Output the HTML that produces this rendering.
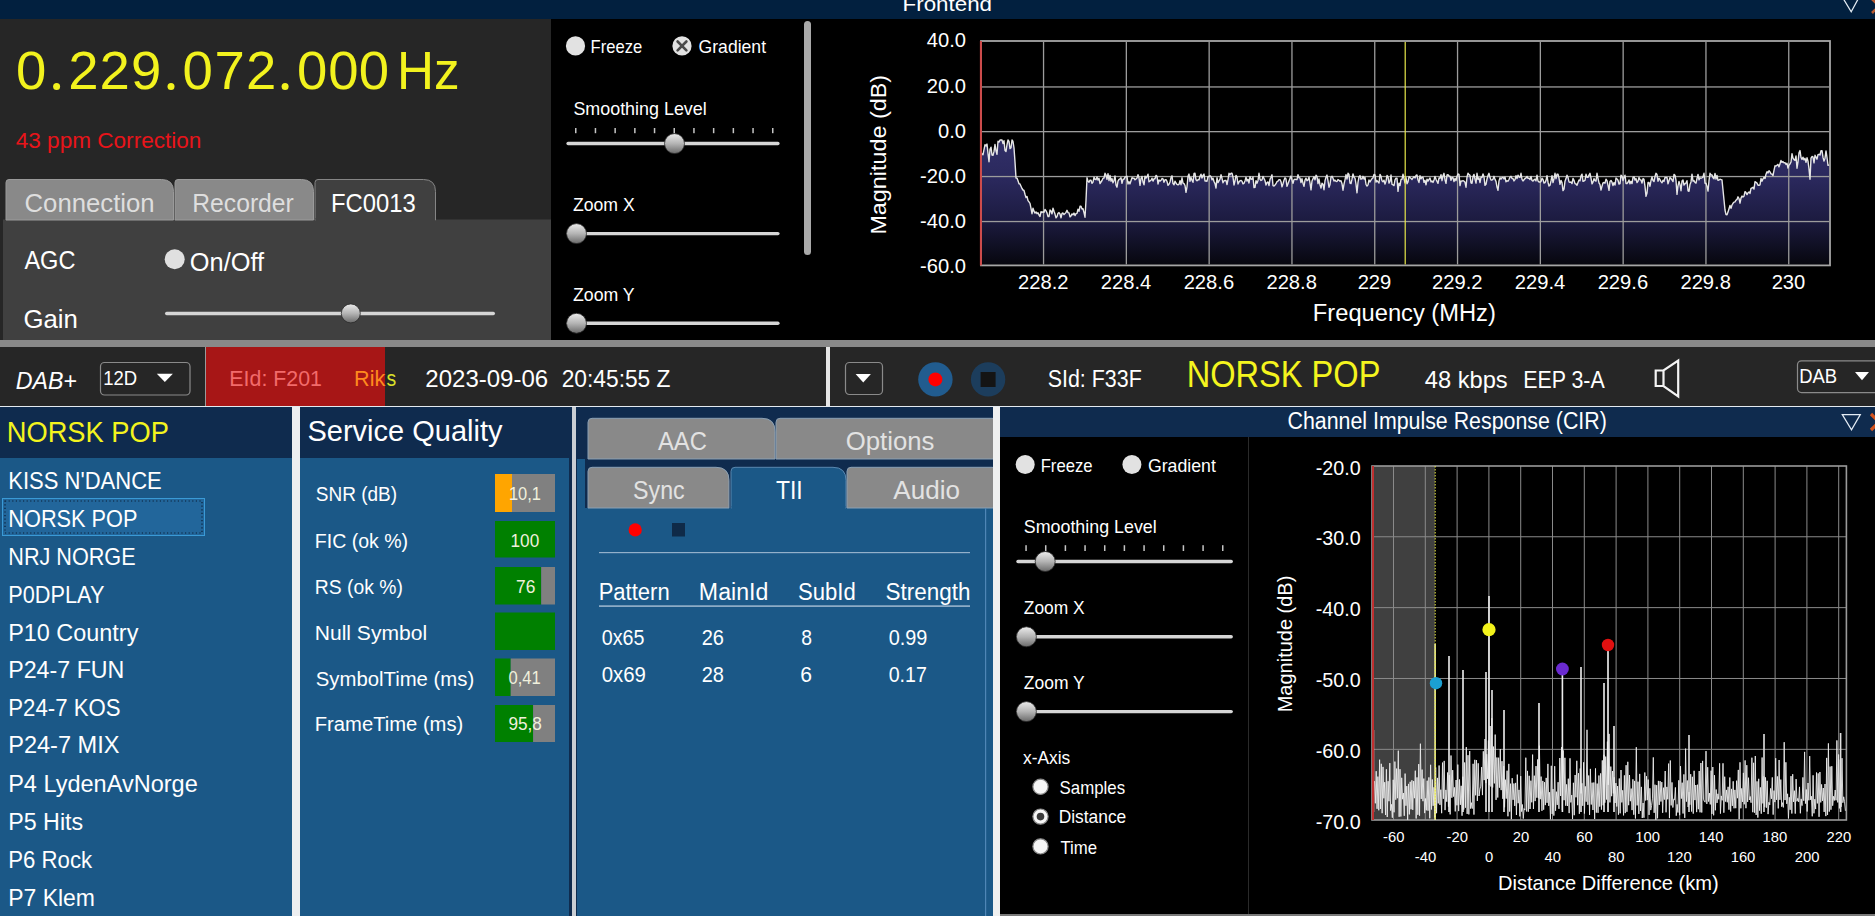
<!DOCTYPE html>
<html><head><meta charset="utf-8"><title>DAB</title>
<style>html,body{margin:0;padding:0;background:#000;overflow:hidden;width:1875px;height:916px}svg{display:block}</style>
</head><body>
<svg width="1875" height="916" viewBox="0 0 1875 916" font-family="'Liberation Sans', sans-serif" shape-rendering="auto">
<defs>
<linearGradient id="thumb" x1="0" y1="0" x2="0" y2="1">
  <stop offset="0" stop-color="#ececec"/><stop offset="0.5" stop-color="#b4b4b4"/><stop offset="1" stop-color="#6a6a6a"/>
</linearGradient>
<linearGradient id="specfill" gradientUnits="userSpaceOnUse" x1="0" y1="42" x2="0" y2="265">
  <stop offset="0" stop-color="#3a3878"/><stop offset="0.48" stop-color="#302e66"/><stop offset="0.62" stop-color="#2a285c"/>
  <stop offset="0.80" stop-color="#1c1b40"/><stop offset="1" stop-color="#07070e"/>
</linearGradient>
</defs>
<rect x="0" y="0" width="1875" height="916" fill="#000"/>
<rect x="0" y="0" width="1875" height="19" fill="#02203f"/>
<rect x="0" y="19" width="551" height="321" fill="#262626"/>
<rect x="3" y="219.5" width="548" height="120.5" fill="#404040"/>
<path d="M6,220 L6,182.5 Q6,179.5 9,179.5 L161.5,179.5 Q173.5,179.5 173.5,191.5 L173.5,220 Z" fill="#898989" stroke="#9a9a9a" stroke-width="1"/>
<path d="M175,220 L175,182.5 Q175,179.5 178,179.5 L301.5,179.5 Q313.5,179.5 313.5,191.5 L313.5,220 Z" fill="#898989" stroke="#9a9a9a" stroke-width="1"/>
<path d="M315,220 L315,182.5 Q315,179.5 318,179.5 L423.5,179.5 Q435.5,179.5 435.5,191.5 L435.5,220 Z" fill="#404040" stroke="#858585" stroke-width="1"/>
<rect x="315.5" y="218" width="119.5" height="3" fill="#404040"/>
<circle cx="174.7" cy="259.3" r="10" fill="#e0e0e0"/>
<rect x="165" y="311.8" width="330" height="3.4" rx="1.7" fill="#d6d6d6"/>
<circle cx="350.8" cy="313.4" r="9.5" fill="url(#thumb)" stroke="#2a2a2a" stroke-width="0.8"/>
<circle cx="575.5" cy="45.9" r="9.6" fill="#e2e2e2"/>
<circle cx="682" cy="45.9" r="9.6" fill="#e2e2e2"/>
<path d="M677.6,41.5 L686.4,50.3 M686.4,41.5 L677.6,50.3" stroke="#4a4a4a" stroke-width="2.6" stroke-linecap="round"/>
<rect x="575.00" y="128" width="1.5" height="5.2" fill="#c4c4c4"/>
<rect x="594.70" y="128" width="1.5" height="5.2" fill="#c4c4c4"/>
<rect x="614.40" y="128" width="1.5" height="5.2" fill="#c4c4c4"/>
<rect x="634.10" y="128" width="1.5" height="5.2" fill="#c4c4c4"/>
<rect x="653.80" y="128" width="1.5" height="5.2" fill="#c4c4c4"/>
<rect x="673.50" y="128" width="1.5" height="5.2" fill="#c4c4c4"/>
<rect x="693.20" y="128" width="1.5" height="5.2" fill="#c4c4c4"/>
<rect x="712.90" y="128" width="1.5" height="5.2" fill="#c4c4c4"/>
<rect x="732.60" y="128" width="1.5" height="5.2" fill="#c4c4c4"/>
<rect x="752.30" y="128" width="1.5" height="5.2" fill="#c4c4c4"/>
<rect x="772.00" y="128" width="1.5" height="5.2" fill="#c4c4c4"/>
<rect x="566.4" y="141.8" width="213.2" height="3.4" rx="1.7" fill="#d6d6d6"/>
<circle cx="674.5" cy="143.6" r="10" fill="url(#thumb)" stroke="#2a2a2a" stroke-width="0.8"/>
<rect x="566.4" y="231.9" width="213.2" height="3.4" rx="1.7" fill="#d6d6d6"/>
<circle cx="576.5" cy="233.6" r="10" fill="url(#thumb)" stroke="#2a2a2a" stroke-width="0.8"/>
<rect x="566.4" y="321.6" width="213.2" height="3.4" rx="1.7" fill="#d6d6d6"/>
<circle cx="576.5" cy="323.3" r="10" fill="url(#thumb)" stroke="#2a2a2a" stroke-width="0.8"/>
<rect x="804" y="21" width="7" height="234" rx="3.5" fill="#a9a9a9"/>
<rect x="0" y="340" width="1875" height="7" fill="#898989"/>
<rect x="0" y="347" width="1875" height="59" fill="#262626"/>
<rect x="205" y="347" width="1" height="59" fill="#9a9a9a"/>
<rect x="206" y="347" width="179" height="59" fill="#a71616"/>
<rect x="826" y="347" width="4" height="59" fill="#e6e6e6"/>
<rect x="100.5" y="362.5" width="89.5" height="32.5" rx="4" fill="#262626" stroke="#8a8a8a" stroke-width="1.2"/>
<path d="M156.8,373.7 L172.9,373.7 L164.85,382 Z" fill="#fff"/>
<rect x="845.5" y="362.5" width="37" height="32" rx="4" fill="#262626" stroke="#8a8a8a" stroke-width="1.2"/>
<path d="M855.6,374 L870.9,374 L863.25,382.4 Z" fill="#fff"/>
<circle cx="935.4" cy="379.4" r="17.2" fill="#215c8f"/>
<circle cx="935.4" cy="379.4" r="7" fill="#ff0000"/>
<circle cx="988.1" cy="379.4" r="17.2" fill="#1c3d5c"/>
<rect x="980.6" y="372" width="15" height="15" fill="#141414"/>
<path d="M1655.7,370.5 L1663.5,370.5 L1678.2,360.5 L1678.2,396.3 L1663.5,386 L1655.7,386 Z M1663.5,370.5 L1663.5,386" fill="none" stroke="#f4f4f4" stroke-width="2.2" stroke-linejoin="miter"/>
<rect x="1797.5" y="360.8" width="90" height="31.8" rx="4" fill="#262626" stroke="#8a8a8a" stroke-width="1.2"/>
<path d="M1855,372 L1869,372 L1862,380.2 Z" fill="#fff"/>
<rect x="0" y="406" width="1875" height="1" fill="#e4eaf0"/>
<rect x="0" y="407" width="1875" height="509" fill="#0f2b4e"/>
<rect x="0" y="458" width="292" height="458" fill="#1b5887"/>
<rect x="2.5" y="498.5" width="202" height="37" fill="#22669b" stroke="#3a9ad6" stroke-width="1"/>
<rect x="5" y="501" width="197" height="32" fill="none" stroke="#0b1e36" stroke-width="1.2" stroke-dasharray="1.2,2.4"/>
<rect x="292" y="407" width="8" height="509" fill="#eceef0"/>
<rect x="300" y="458" width="269" height="458" fill="#1b5887"/>
<rect x="572" y="407" width="4" height="509" fill="#c9ced4"/>
<rect x="495" y="474" width="17.00" height="38" fill="#ffa500"/>
<rect x="512" y="474" width="43.00" height="38" fill="#808080"/>
<rect x="495" y="521" width="60.00" height="36.5" fill="#008000"/>
<rect x="495" y="567" width="46.20" height="37.5" fill="#008000"/>
<rect x="541.2" y="567" width="13.80" height="37.5" fill="#808080"/>
<rect x="495" y="612.5" width="60.00" height="37.5" fill="#008000"/>
<rect x="495" y="658.5" width="15.70" height="37.5" fill="#008000"/>
<rect x="510.7" y="658.5" width="44.30" height="37.5" fill="#808080"/>
<rect x="495" y="705" width="38.10" height="37" fill="#008000"/>
<rect x="533.1" y="705" width="21.90" height="37" fill="#808080"/>
<rect x="577" y="459" width="8" height="49" fill="#1b5887"/>
<rect x="577" y="508" width="416" height="408" fill="#1b5887"/>
<path d="M588,459 L588,422.3 Q588,418.3 592,418.3 L762,418.3 Q775,418.3 775,431.3 L775,459 Z" fill="#898989" stroke="#8aa0b4" stroke-width="1"/>
<path d="M776,459 L776,422.3 Q776,418.3 780,418.3 L992,418.3 Q1005,418.3 1005,431.3 L1005,459 Z" fill="#898989" stroke="#8aa0b4" stroke-width="1"/>
<path d="M588,508 L588,471.3 Q588,467.3 592,467.3 L716,467.3 Q729,467.3 729,480.3 L729,508 Z" fill="#898989" stroke="#8aa0b4" stroke-width="1"/>
<path d="M731,508 L731,471.3 Q731,467.3 735,467.3 L833,467.3 Q846,467.3 846,480.3 L846,508 Z" fill="#1b5887" stroke="#5a88b0" stroke-width="1"/>
<rect x="731.6" y="506" width="113.8" height="4" fill="#1b5887"/>
<path d="M847,508 L847,471.3 Q847,467.3 851,467.3 L992,467.3 Q1005,467.3 1005,480.3 L1005,508 Z" fill="#898989" stroke="#8aa0b4" stroke-width="1"/>
<circle cx="635.2" cy="529.9" r="6.6" fill="#ff0000"/>
<rect x="672" y="523" width="13" height="13.5" fill="#0f2a48"/>
<rect x="599" y="552" width="371" height="1.2" fill="#93b0ca"/>
<rect x="599" y="605.4" width="371" height="1.4" fill="#a9c0d6"/>
<rect x="985" y="508" width="1.2" height="408" fill="#4f86b6"/>
<rect x="993" y="407" width="7" height="509" fill="#eff0f0"/>
<rect x="1000" y="437" width="875" height="479" fill="#000"/>
<rect x="1000" y="407" width="875" height="30" fill="#0f2b4e"/>
<rect x="1248" y="437" width="1" height="477" fill="#2a2a2a"/>
<rect x="1000" y="914" width="875" height="2" fill="#7a7a7a"/>
<path d="M1842.3,414.6 L1860.3,414.6 L1851.5,429.8 Z" fill="none" stroke="#e4ecf4" stroke-width="1.25" stroke-linejoin="miter"/>
<path d="M1871,414 L1887,430 M1887,414 L1871,430" stroke="#d4541e" stroke-width="3.2"/>
<path d="M1843.2,-1.5 L1858.4,-1.5 L1851.2,11.8 Z" fill="none" stroke="#e4ecf4" stroke-width="1.25"/>
<path d="M1872,-1 L1886,13 M1886,-1 L1872,13" stroke="#b85a30" stroke-width="2.6"/>
<circle cx="1025.2" cy="464.5" r="9.5" fill="#e2e2e2"/>
<circle cx="1131.9" cy="464.5" r="9.5" fill="#e2e2e2"/>
<rect x="1025.30" y="545.2" width="1.5" height="5.8" fill="#c4c4c4"/>
<rect x="1044.97" y="545.2" width="1.5" height="5.8" fill="#c4c4c4"/>
<rect x="1064.64" y="545.2" width="1.5" height="5.8" fill="#c4c4c4"/>
<rect x="1084.31" y="545.2" width="1.5" height="5.8" fill="#c4c4c4"/>
<rect x="1103.98" y="545.2" width="1.5" height="5.8" fill="#c4c4c4"/>
<rect x="1123.65" y="545.2" width="1.5" height="5.8" fill="#c4c4c4"/>
<rect x="1143.32" y="545.2" width="1.5" height="5.8" fill="#c4c4c4"/>
<rect x="1162.99" y="545.2" width="1.5" height="5.8" fill="#c4c4c4"/>
<rect x="1182.66" y="545.2" width="1.5" height="5.8" fill="#c4c4c4"/>
<rect x="1202.33" y="545.2" width="1.5" height="5.8" fill="#c4c4c4"/>
<rect x="1222.00" y="545.2" width="1.5" height="5.8" fill="#c4c4c4"/>
<rect x="1016.3" y="559.8" width="216.6" height="3.4" rx="1.7" fill="#d6d6d6"/>
<circle cx="1045.2" cy="561.5" r="10" fill="url(#thumb)" stroke="#2a2a2a" stroke-width="0.8"/>
<rect x="1016.3" y="635.1" width="216.6" height="3.4" rx="1.7" fill="#d6d6d6"/>
<circle cx="1026.4" cy="636.8" r="10" fill="url(#thumb)" stroke="#2a2a2a" stroke-width="0.8"/>
<rect x="1016.3" y="709.9" width="216.6" height="3.4" rx="1.7" fill="#d6d6d6"/>
<circle cx="1026.4" cy="711.6" r="10" fill="url(#thumb)" stroke="#2a2a2a" stroke-width="0.8"/>
<circle cx="1040.5" cy="786.8" r="7.6" fill="#f6f6f6" stroke="#8a8a8a" stroke-width="1.2"/>
<circle cx="1040.5" cy="816.6" r="7.6" fill="#f6f6f6" stroke="#8a8a8a" stroke-width="1.2"/>
<circle cx="1040.5" cy="846.4" r="7.6" fill="#f6f6f6" stroke="#8a8a8a" stroke-width="1.2"/>
<circle cx="1040.5" cy="816.6" r="3.8" fill="#3a3a3a"/>
<polygon points="982,264.4 982.0,153.5 983.0,154.7 984.0,149.7 985.0,144.6 986.0,145.9 987.0,144.1 988.0,153.3 989.0,161.7 990.0,149.4 991.0,147.2 992.0,155.1 993.0,155.4 994.0,151.4 995.0,144.4 996.0,150.7 997.0,154.3 998.0,141.2 999.0,142.1 1000.0,140.0 1001.0,140.0 1002.0,140.0 1003.0,143.6 1004.0,140.7 1005.0,150.5 1006.0,151.5 1007.0,144.7 1008.0,140.0 1009.0,141.4 1010.0,148.6 1011.0,147.8 1012.0,140.0 1013.0,141.5 1014.0,148.0 1015.0,162.0 1016.0,178.0 1017.0,178.1 1018.0,180.8 1019.0,183.8 1020.0,184.0 1021.0,186.2 1022.0,188.5 1023.0,190.0 1024.0,190.5 1025.0,194.3 1026.0,197.5 1027.0,196.4 1028.0,200.6 1029.0,201.9 1030.0,203.3 1031.0,208.4 1032.0,213.7 1033.0,208.2 1034.0,211.2 1035.0,213.1 1036.0,211.9 1037.0,213.7 1038.0,212.7 1039.0,215.0 1040.0,216.5 1041.0,211.6 1042.0,212.5 1043.0,211.7 1044.0,212.3 1045.0,209.4 1046.0,210.7 1047.0,212.9 1048.0,216.6 1049.0,216.5 1050.0,210.0 1051.0,211.0 1052.0,213.9 1053.0,208.2 1054.0,211.3 1055.0,214.1 1056.0,217.9 1057.0,216.5 1058.0,213.3 1059.0,212.6 1060.0,214.0 1061.0,217.9 1062.0,213.5 1063.0,213.0 1064.0,214.6 1065.0,213.6 1066.0,212.4 1067.0,210.3 1068.0,212.6 1069.0,212.9 1070.0,216.9 1071.0,215.9 1072.0,213.9 1073.0,214.8 1074.0,213.0 1075.0,215.6 1076.0,213.6 1077.0,213.4 1078.0,209.2 1079.0,211.3 1080.0,206.3 1081.0,206.2 1082.0,209.0 1083.0,208.8 1084.0,212.6 1085.0,217.2 1086.0,200.5 1087.0,177.7 1088.0,181.1 1089.0,182.3 1090.0,180.1 1091.0,180.2 1092.0,183.3 1093.0,182.1 1094.0,177.1 1095.0,179.4 1096.0,179.7 1097.0,176.9 1098.0,180.0 1099.0,178.3 1100.0,183.5 1101.0,182.0 1102.0,180.5 1103.0,178.3 1104.0,178.0 1105.0,173.3 1106.0,175.1 1107.0,179.3 1108.0,173.7 1109.0,180.6 1110.0,175.4 1111.0,181.2 1112.0,178.6 1113.0,182.8 1114.0,180.4 1115.0,176.0 1116.0,185.0 1117.0,187.2 1118.0,181.2 1119.0,179.3 1120.0,178.9 1121.0,177.7 1122.0,183.3 1123.0,179.3 1124.0,179.3 1125.0,177.1 1126.0,176.6 1127.0,176.3 1128.0,184.0 1129.0,181.7 1130.0,183.9 1131.0,180.8 1132.0,177.7 1133.0,178.3 1134.0,178.2 1135.0,179.8 1136.0,178.9 1137.0,178.0 1138.0,174.6 1139.0,177.8 1140.0,185.4 1141.0,178.5 1142.0,176.4 1143.0,182.0 1144.0,184.8 1145.0,176.1 1146.0,178.1 1147.0,176.7 1148.0,174.2 1149.0,181.8 1150.0,181.0 1151.0,180.2 1152.0,178.2 1153.0,181.1 1154.0,178.8 1155.0,178.7 1156.0,175.4 1157.0,176.2 1158.0,184.0 1159.0,179.9 1160.0,181.1 1161.0,180.3 1162.0,178.5 1163.0,178.8 1164.0,182.2 1165.0,179.8 1166.0,179.7 1167.0,181.4 1168.0,185.3 1169.0,184.2 1170.0,182.0 1171.0,177.7 1172.0,175.8 1173.0,183.6 1174.0,184.7 1175.0,181.2 1176.0,183.0 1177.0,184.4 1178.0,184.9 1179.0,184.2 1180.0,180.7 1181.0,184.7 1182.0,177.8 1183.0,183.1 1184.0,183.7 1185.0,185.5 1186.0,192.3 1187.0,186.8 1188.0,176.2 1189.0,174.1 1190.0,181.4 1191.0,177.4 1192.0,180.3 1193.0,182.3 1194.0,173.5 1195.0,173.3 1196.0,179.8 1197.0,180.7 1198.0,179.7 1199.0,179.8 1200.0,176.2 1201.0,174.2 1202.0,178.0 1203.0,175.5 1204.0,174.1 1205.0,181.0 1206.0,181.0 1207.0,181.2 1208.0,176.7 1209.0,176.5 1210.0,175.7 1211.0,176.6 1212.0,179.9 1213.0,178.1 1214.0,181.5 1215.0,183.6 1216.0,188.0 1217.0,177.7 1218.0,182.6 1219.0,180.9 1220.0,179.2 1221.0,174.8 1222.0,178.3 1223.0,182.8 1224.0,180.8 1225.0,180.5 1226.0,180.4 1227.0,184.5 1228.0,179.6 1229.0,173.3 1230.0,174.7 1231.0,173.3 1232.0,173.3 1233.0,177.1 1234.0,185.0 1235.0,180.8 1236.0,175.5 1237.0,177.0 1238.0,184.0 1239.0,182.0 1240.0,180.8 1241.0,180.4 1242.0,181.2 1243.0,183.9 1244.0,183.3 1245.0,180.9 1246.0,177.3 1247.0,181.0 1248.0,179.3 1249.0,183.0 1250.0,176.6 1251.0,179.0 1252.0,179.3 1253.0,177.0 1254.0,187.6 1255.0,187.4 1256.0,180.6 1257.0,183.2 1258.0,180.4 1259.0,173.3 1260.0,179.3 1261.0,180.5 1262.0,179.9 1263.0,176.4 1264.0,178.5 1265.0,180.6 1266.0,185.0 1267.0,182.6 1268.0,181.9 1269.0,185.6 1270.0,179.4 1271.0,177.2 1272.0,174.8 1273.0,185.6 1274.0,186.0 1275.0,185.1 1276.0,183.7 1277.0,181.6 1278.0,181.2 1279.0,179.6 1280.0,179.6 1281.0,181.7 1282.0,186.8 1283.0,183.7 1284.0,180.3 1285.0,177.8 1286.0,179.0 1287.0,186.3 1288.0,183.7 1289.0,180.9 1290.0,178.4 1291.0,176.1 1292.0,180.1 1293.0,183.3 1294.0,179.6 1295.0,179.2 1296.0,179.6 1297.0,179.5 1298.0,174.6 1299.0,177.7 1300.0,177.9 1301.0,182.5 1302.0,178.8 1303.0,183.2 1304.0,186.3 1305.0,180.1 1306.0,178.2 1307.0,180.7 1308.0,179.9 1309.0,177.2 1310.0,183.0 1311.0,189.9 1312.0,181.0 1313.0,178.7 1314.0,176.8 1315.0,179.9 1316.0,175.3 1317.0,176.5 1318.0,183.6 1319.0,179.0 1320.0,184.9 1321.0,188.1 1322.0,183.1 1323.0,184.2 1324.0,189.7 1325.0,180.8 1326.0,177.1 1327.0,175.1 1328.0,180.8 1329.0,187.2 1330.0,184.4 1331.0,177.1 1332.0,176.3 1333.0,178.2 1334.0,181.0 1335.0,180.1 1336.0,181.4 1337.0,181.5 1338.0,179.6 1339.0,180.3 1340.0,181.2 1341.0,180.7 1342.0,183.7 1343.0,190.2 1344.0,184.2 1345.0,179.8 1346.0,174.7 1347.0,179.1 1348.0,173.3 1349.0,174.5 1350.0,183.1 1351.0,183.6 1352.0,179.2 1353.0,173.9 1354.0,177.3 1355.0,178.2 1356.0,184.1 1357.0,192.8 1358.0,182.4 1359.0,176.9 1360.0,175.6 1361.0,179.2 1362.0,178.9 1363.0,176.3 1364.0,179.1 1365.0,177.3 1366.0,184.5 1367.0,186.1 1368.0,184.9 1369.0,180.0 1370.0,181.9 1371.0,180.1 1372.0,178.7 1373.0,177.9 1374.0,174.4 1375.0,174.8 1376.0,182.1 1377.0,180.6 1378.0,181.9 1379.0,183.0 1380.0,174.4 1381.0,176.4 1382.0,180.8 1383.0,181.8 1384.0,180.2 1385.0,184.1 1386.0,181.1 1387.0,175.5 1388.0,176.8 1389.0,183.1 1390.0,181.3 1391.0,175.0 1392.0,184.4 1393.0,184.8 1394.0,185.6 1395.0,179.9 1396.0,178.2 1397.0,178.1 1398.0,191.4 1399.0,183.1 1400.0,185.6 1401.0,179.5 1402.0,179.3 1403.0,174.2 1404.0,178.6 1405.0,182.8 1406.0,177.5 1407.0,183.7 1408.0,181.8 1409.0,176.6 1410.0,177.5 1411.0,178.4 1412.0,179.5 1413.0,177.9 1414.0,176.8 1415.0,177.9 1416.0,175.5 1417.0,175.0 1418.0,180.0 1419.0,182.5 1420.0,175.6 1421.0,178.8 1422.0,177.4 1423.0,177.1 1424.0,182.4 1425.0,180.4 1426.0,184.9 1427.0,179.1 1428.0,181.1 1429.0,179.4 1430.0,178.0 1431.0,181.9 1432.0,180.9 1433.0,182.5 1434.0,180.0 1435.0,176.4 1436.0,179.3 1437.0,181.4 1438.0,183.3 1439.0,177.9 1440.0,178.3 1441.0,174.7 1442.0,180.7 1443.0,175.7 1444.0,173.3 1445.0,179.7 1446.0,183.3 1447.0,175.0 1448.0,174.8 1449.0,176.1 1450.0,176.1 1451.0,180.4 1452.0,177.3 1453.0,177.7 1454.0,181.5 1455.0,178.5 1456.0,180.7 1457.0,176.4 1458.0,173.9 1459.0,174.3 1460.0,185.6 1461.0,181.0 1462.0,181.1 1463.0,180.7 1464.0,181.1 1465.0,182.3 1466.0,187.2 1467.0,177.0 1468.0,173.3 1469.0,174.6 1470.0,175.4 1471.0,182.8 1472.0,183.3 1473.0,176.6 1474.0,174.4 1475.0,179.2 1476.0,183.1 1477.0,173.3 1478.0,179.4 1479.0,177.8 1480.0,182.6 1481.0,177.2 1482.0,177.4 1483.0,174.0 1484.0,176.8 1485.0,185.4 1486.0,184.3 1487.0,179.0 1488.0,175.5 1489.0,173.3 1490.0,177.6 1491.0,180.0 1492.0,180.1 1493.0,179.2 1494.0,176.3 1495.0,179.4 1496.0,181.3 1497.0,187.1 1498.0,190.3 1499.0,180.9 1500.0,177.6 1501.0,179.2 1502.0,177.7 1503.0,177.3 1504.0,178.9 1505.0,177.1 1506.0,181.8 1507.0,180.8 1508.0,181.2 1509.0,179.5 1510.0,177.0 1511.0,176.3 1512.0,178.5 1513.0,178.5 1514.0,180.9 1515.0,179.6 1516.0,175.6 1517.0,178.6 1518.0,175.2 1519.0,177.0 1520.0,177.3 1521.0,173.3 1522.0,179.3 1523.0,181.0 1524.0,179.7 1525.0,178.5 1526.0,178.0 1527.0,176.4 1528.0,178.3 1529.0,178.3 1530.0,179.5 1531.0,176.4 1532.0,180.5 1533.0,181.1 1534.0,179.8 1535.0,179.2 1536.0,180.9 1537.0,175.2 1538.0,181.1 1539.0,182.0 1540.0,182.0 1541.0,181.6 1542.0,178.2 1543.0,179.5 1544.0,183.0 1545.0,182.7 1546.0,180.4 1547.0,175.6 1548.0,182.2 1549.0,186.0 1550.0,185.3 1551.0,180.9 1552.0,175.7 1553.0,182.6 1554.0,178.7 1555.0,173.3 1556.0,178.7 1557.0,174.3 1558.0,174.1 1559.0,178.2 1560.0,184.4 1561.0,180.4 1562.0,182.6 1563.0,190.6 1564.0,189.1 1565.0,181.2 1566.0,178.6 1567.0,175.2 1568.0,177.3 1569.0,181.8 1570.0,182.4 1571.0,182.0 1572.0,183.6 1573.0,178.4 1574.0,180.3 1575.0,183.6 1576.0,184.0 1577.0,185.2 1578.0,182.5 1579.0,180.0 1580.0,180.8 1581.0,175.8 1582.0,174.2 1583.0,181.3 1584.0,181.0 1585.0,180.3 1586.0,174.3 1587.0,177.4 1588.0,177.4 1589.0,175.1 1590.0,173.3 1591.0,178.2 1592.0,183.8 1593.0,182.1 1594.0,178.6 1595.0,180.6 1596.0,181.1 1597.0,173.3 1598.0,178.3 1599.0,182.9 1600.0,184.7 1601.0,190.1 1602.0,186.2 1603.0,182.8 1604.0,182.5 1605.0,183.2 1606.0,179.1 1607.0,180.6 1608.0,185.3 1609.0,190.3 1610.0,181.4 1611.0,180.4 1612.0,182.2 1613.0,185.5 1614.0,182.6 1615.0,185.1 1616.0,178.0 1617.0,178.9 1618.0,180.2 1619.0,184.0 1620.0,183.7 1621.0,175.1 1622.0,176.2 1623.0,180.5 1624.0,177.2 1625.0,175.2 1626.0,183.5 1627.0,183.5 1628.0,182.3 1629.0,180.0 1630.0,183.7 1631.0,181.3 1632.0,183.6 1633.0,177.4 1634.0,176.8 1635.0,180.0 1636.0,178.6 1637.0,182.6 1638.0,181.3 1639.0,177.4 1640.0,179.8 1641.0,180.0 1642.0,183.1 1643.0,178.6 1644.0,179.4 1645.0,186.4 1646.0,196.4 1647.0,193.1 1648.0,182.5 1649.0,182.5 1650.0,186.2 1651.0,180.5 1652.0,176.9 1653.0,180.5 1654.0,181.6 1655.0,176.5 1656.0,173.3 1657.0,174.5 1658.0,181.2 1659.0,178.1 1660.0,179.6 1661.0,181.6 1662.0,182.7 1663.0,180.2 1664.0,181.4 1665.0,177.4 1666.0,177.7 1667.0,177.4 1668.0,183.8 1669.0,180.7 1670.0,177.5 1671.0,178.5 1672.0,180.0 1673.0,181.6 1674.0,174.4 1675.0,175.2 1676.0,180.3 1677.0,194.4 1678.0,185.9 1679.0,181.4 1680.0,184.6 1681.0,190.7 1682.0,181.0 1683.0,179.9 1684.0,185.0 1685.0,183.8 1686.0,182.9 1687.0,180.7 1688.0,190.8 1689.0,191.3 1690.0,184.4 1691.0,181.9 1692.0,174.1 1693.0,181.1 1694.0,180.6 1695.0,182.5 1696.0,183.1 1697.0,178.5 1698.0,174.4 1699.0,179.9 1700.0,177.8 1701.0,178.2 1702.0,177.8 1703.0,177.0 1704.0,173.3 1705.0,183.3 1706.0,183.2 1707.0,186.4 1708.0,191.1 1709.0,180.7 1710.0,173.3 1711.0,174.9 1712.0,175.0 1713.0,177.8 1714.0,178.8 1715.0,173.5 1716.0,179.0 1717.0,175.5 1718.0,180.3 1719.0,180.1 1720.0,179.2 1721.0,179.6 1722.0,180.0 1723.0,190.0 1724.0,200.0 1725.0,210.0 1726.0,214.6 1727.0,214.8 1728.0,212.1 1729.0,208.8 1730.0,205.5 1731.0,208.3 1732.0,205.0 1733.0,203.3 1734.0,202.1 1735.0,201.8 1736.0,200.2 1737.0,199.4 1738.0,196.8 1739.0,198.5 1740.0,203.2 1741.0,198.1 1742.0,196.1 1743.0,197.1 1744.0,196.2 1745.0,191.6 1746.0,192.6 1747.0,194.6 1748.0,192.8 1749.0,192.0 1750.0,193.4 1751.0,188.4 1752.0,188.0 1753.0,187.2 1754.0,189.1 1755.0,181.7 1756.0,182.3 1757.0,183.1 1758.0,185.2 1759.0,185.3 1760.0,184.8 1761.0,178.5 1762.0,181.2 1763.0,178.9 1764.0,177.3 1765.0,178.5 1766.0,174.2 1767.0,171.7 1768.0,172.9 1769.0,170.7 1770.0,171.9 1771.0,173.9 1772.0,174.2 1773.0,175.5 1774.0,170.3 1775.0,165.8 1776.0,166.1 1777.0,165.2 1778.0,164.4 1779.0,166.9 1780.0,163.7 1781.0,160.5 1782.0,162.3 1783.0,161.6 1784.0,162.9 1785.0,162.7 1786.0,164.5 1787.0,163.3 1788.0,168.0 1789.0,165.1 1790.0,164.0 1791.0,162.0 1792.0,153.6 1793.0,158.2 1794.0,159.7 1795.0,160.3 1796.0,155.9 1797.0,168.2 1798.0,162.0 1799.0,152.8 1800.0,150.6 1801.0,157.5 1802.0,159.4 1803.0,157.2 1804.0,159.9 1805.0,158.3 1806.0,162.4 1807.0,157.8 1808.0,161.1 1809.0,169.0 1810.0,179.3 1811.0,158.1 1812.0,156.5 1813.0,156.9 1814.0,162.9 1815.0,155.3 1816.0,157.1 1817.0,159.2 1818.0,154.7 1819.0,154.3 1820.0,155.0 1821.0,150.6 1822.0,150.6 1823.0,157.4 1824.0,161.1 1825.0,158.2 1826.0,150.9 1827.0,157.5 1828.0,165.3 1829.0,164.8 1829,264.4" fill="url(#specfill)"/>
<rect x="1042.90" y="42" width="1.3" height="222.4" fill="#9c9c9c"/>
<rect x="1125.70" y="42" width="1.3" height="222.4" fill="#9c9c9c"/>
<rect x="1208.50" y="42" width="1.3" height="222.4" fill="#9c9c9c"/>
<rect x="1291.30" y="42" width="1.3" height="222.4" fill="#9c9c9c"/>
<rect x="1374.10" y="42" width="1.3" height="222.4" fill="#9c9c9c"/>
<rect x="1456.90" y="42" width="1.3" height="222.4" fill="#9c9c9c"/>
<rect x="1539.70" y="42" width="1.3" height="222.4" fill="#9c9c9c"/>
<rect x="1622.50" y="42" width="1.3" height="222.4" fill="#9c9c9c"/>
<rect x="1705.30" y="42" width="1.3" height="222.4" fill="#9c9c9c"/>
<rect x="1788.10" y="42" width="1.3" height="222.4" fill="#9c9c9c"/>
<rect x="981" y="86.30" width="848" height="1.3" fill="#9c9c9c"/>
<rect x="981" y="131.00" width="848" height="1.3" fill="#9c9c9c"/>
<rect x="981" y="175.90" width="848" height="1.3" fill="#9c9c9c"/>
<rect x="981" y="220.90" width="848" height="1.3" fill="#9c9c9c"/>
<rect x="981" y="41" width="849" height="224.4" fill="none" stroke="#a6a6a6" stroke-width="1.8"/>
<polyline points="982.0,153.5 983.0,154.7 984.0,149.7 985.0,144.6 986.0,145.9 987.0,144.1 988.0,153.3 989.0,161.7 990.0,149.4 991.0,147.2 992.0,155.1 993.0,155.4 994.0,151.4 995.0,144.4 996.0,150.7 997.0,154.3 998.0,141.2 999.0,142.1 1000.0,140.0 1001.0,140.0 1002.0,140.0 1003.0,143.6 1004.0,140.7 1005.0,150.5 1006.0,151.5 1007.0,144.7 1008.0,140.0 1009.0,141.4 1010.0,148.6 1011.0,147.8 1012.0,140.0 1013.0,141.5 1014.0,148.0 1015.0,162.0 1016.0,178.0 1017.0,178.1 1018.0,180.8 1019.0,183.8 1020.0,184.0 1021.0,186.2 1022.0,188.5 1023.0,190.0 1024.0,190.5 1025.0,194.3 1026.0,197.5 1027.0,196.4 1028.0,200.6 1029.0,201.9 1030.0,203.3 1031.0,208.4 1032.0,213.7 1033.0,208.2 1034.0,211.2 1035.0,213.1 1036.0,211.9 1037.0,213.7 1038.0,212.7 1039.0,215.0 1040.0,216.5 1041.0,211.6 1042.0,212.5 1043.0,211.7 1044.0,212.3 1045.0,209.4 1046.0,210.7 1047.0,212.9 1048.0,216.6 1049.0,216.5 1050.0,210.0 1051.0,211.0 1052.0,213.9 1053.0,208.2 1054.0,211.3 1055.0,214.1 1056.0,217.9 1057.0,216.5 1058.0,213.3 1059.0,212.6 1060.0,214.0 1061.0,217.9 1062.0,213.5 1063.0,213.0 1064.0,214.6 1065.0,213.6 1066.0,212.4 1067.0,210.3 1068.0,212.6 1069.0,212.9 1070.0,216.9 1071.0,215.9 1072.0,213.9 1073.0,214.8 1074.0,213.0 1075.0,215.6 1076.0,213.6 1077.0,213.4 1078.0,209.2 1079.0,211.3 1080.0,206.3 1081.0,206.2 1082.0,209.0 1083.0,208.8 1084.0,212.6 1085.0,217.2 1086.0,200.5 1087.0,177.7 1088.0,181.1 1089.0,182.3 1090.0,180.1 1091.0,180.2 1092.0,183.3 1093.0,182.1 1094.0,177.1 1095.0,179.4 1096.0,179.7 1097.0,176.9 1098.0,180.0 1099.0,178.3 1100.0,183.5 1101.0,182.0 1102.0,180.5 1103.0,178.3 1104.0,178.0 1105.0,173.3 1106.0,175.1 1107.0,179.3 1108.0,173.7 1109.0,180.6 1110.0,175.4 1111.0,181.2 1112.0,178.6 1113.0,182.8 1114.0,180.4 1115.0,176.0 1116.0,185.0 1117.0,187.2 1118.0,181.2 1119.0,179.3 1120.0,178.9 1121.0,177.7 1122.0,183.3 1123.0,179.3 1124.0,179.3 1125.0,177.1 1126.0,176.6 1127.0,176.3 1128.0,184.0 1129.0,181.7 1130.0,183.9 1131.0,180.8 1132.0,177.7 1133.0,178.3 1134.0,178.2 1135.0,179.8 1136.0,178.9 1137.0,178.0 1138.0,174.6 1139.0,177.8 1140.0,185.4 1141.0,178.5 1142.0,176.4 1143.0,182.0 1144.0,184.8 1145.0,176.1 1146.0,178.1 1147.0,176.7 1148.0,174.2 1149.0,181.8 1150.0,181.0 1151.0,180.2 1152.0,178.2 1153.0,181.1 1154.0,178.8 1155.0,178.7 1156.0,175.4 1157.0,176.2 1158.0,184.0 1159.0,179.9 1160.0,181.1 1161.0,180.3 1162.0,178.5 1163.0,178.8 1164.0,182.2 1165.0,179.8 1166.0,179.7 1167.0,181.4 1168.0,185.3 1169.0,184.2 1170.0,182.0 1171.0,177.7 1172.0,175.8 1173.0,183.6 1174.0,184.7 1175.0,181.2 1176.0,183.0 1177.0,184.4 1178.0,184.9 1179.0,184.2 1180.0,180.7 1181.0,184.7 1182.0,177.8 1183.0,183.1 1184.0,183.7 1185.0,185.5 1186.0,192.3 1187.0,186.8 1188.0,176.2 1189.0,174.1 1190.0,181.4 1191.0,177.4 1192.0,180.3 1193.0,182.3 1194.0,173.5 1195.0,173.3 1196.0,179.8 1197.0,180.7 1198.0,179.7 1199.0,179.8 1200.0,176.2 1201.0,174.2 1202.0,178.0 1203.0,175.5 1204.0,174.1 1205.0,181.0 1206.0,181.0 1207.0,181.2 1208.0,176.7 1209.0,176.5 1210.0,175.7 1211.0,176.6 1212.0,179.9 1213.0,178.1 1214.0,181.5 1215.0,183.6 1216.0,188.0 1217.0,177.7 1218.0,182.6 1219.0,180.9 1220.0,179.2 1221.0,174.8 1222.0,178.3 1223.0,182.8 1224.0,180.8 1225.0,180.5 1226.0,180.4 1227.0,184.5 1228.0,179.6 1229.0,173.3 1230.0,174.7 1231.0,173.3 1232.0,173.3 1233.0,177.1 1234.0,185.0 1235.0,180.8 1236.0,175.5 1237.0,177.0 1238.0,184.0 1239.0,182.0 1240.0,180.8 1241.0,180.4 1242.0,181.2 1243.0,183.9 1244.0,183.3 1245.0,180.9 1246.0,177.3 1247.0,181.0 1248.0,179.3 1249.0,183.0 1250.0,176.6 1251.0,179.0 1252.0,179.3 1253.0,177.0 1254.0,187.6 1255.0,187.4 1256.0,180.6 1257.0,183.2 1258.0,180.4 1259.0,173.3 1260.0,179.3 1261.0,180.5 1262.0,179.9 1263.0,176.4 1264.0,178.5 1265.0,180.6 1266.0,185.0 1267.0,182.6 1268.0,181.9 1269.0,185.6 1270.0,179.4 1271.0,177.2 1272.0,174.8 1273.0,185.6 1274.0,186.0 1275.0,185.1 1276.0,183.7 1277.0,181.6 1278.0,181.2 1279.0,179.6 1280.0,179.6 1281.0,181.7 1282.0,186.8 1283.0,183.7 1284.0,180.3 1285.0,177.8 1286.0,179.0 1287.0,186.3 1288.0,183.7 1289.0,180.9 1290.0,178.4 1291.0,176.1 1292.0,180.1 1293.0,183.3 1294.0,179.6 1295.0,179.2 1296.0,179.6 1297.0,179.5 1298.0,174.6 1299.0,177.7 1300.0,177.9 1301.0,182.5 1302.0,178.8 1303.0,183.2 1304.0,186.3 1305.0,180.1 1306.0,178.2 1307.0,180.7 1308.0,179.9 1309.0,177.2 1310.0,183.0 1311.0,189.9 1312.0,181.0 1313.0,178.7 1314.0,176.8 1315.0,179.9 1316.0,175.3 1317.0,176.5 1318.0,183.6 1319.0,179.0 1320.0,184.9 1321.0,188.1 1322.0,183.1 1323.0,184.2 1324.0,189.7 1325.0,180.8 1326.0,177.1 1327.0,175.1 1328.0,180.8 1329.0,187.2 1330.0,184.4 1331.0,177.1 1332.0,176.3 1333.0,178.2 1334.0,181.0 1335.0,180.1 1336.0,181.4 1337.0,181.5 1338.0,179.6 1339.0,180.3 1340.0,181.2 1341.0,180.7 1342.0,183.7 1343.0,190.2 1344.0,184.2 1345.0,179.8 1346.0,174.7 1347.0,179.1 1348.0,173.3 1349.0,174.5 1350.0,183.1 1351.0,183.6 1352.0,179.2 1353.0,173.9 1354.0,177.3 1355.0,178.2 1356.0,184.1 1357.0,192.8 1358.0,182.4 1359.0,176.9 1360.0,175.6 1361.0,179.2 1362.0,178.9 1363.0,176.3 1364.0,179.1 1365.0,177.3 1366.0,184.5 1367.0,186.1 1368.0,184.9 1369.0,180.0 1370.0,181.9 1371.0,180.1 1372.0,178.7 1373.0,177.9 1374.0,174.4 1375.0,174.8 1376.0,182.1 1377.0,180.6 1378.0,181.9 1379.0,183.0 1380.0,174.4 1381.0,176.4 1382.0,180.8 1383.0,181.8 1384.0,180.2 1385.0,184.1 1386.0,181.1 1387.0,175.5 1388.0,176.8 1389.0,183.1 1390.0,181.3 1391.0,175.0 1392.0,184.4 1393.0,184.8 1394.0,185.6 1395.0,179.9 1396.0,178.2 1397.0,178.1 1398.0,191.4 1399.0,183.1 1400.0,185.6 1401.0,179.5 1402.0,179.3 1403.0,174.2 1404.0,178.6 1405.0,182.8 1406.0,177.5 1407.0,183.7 1408.0,181.8 1409.0,176.6 1410.0,177.5 1411.0,178.4 1412.0,179.5 1413.0,177.9 1414.0,176.8 1415.0,177.9 1416.0,175.5 1417.0,175.0 1418.0,180.0 1419.0,182.5 1420.0,175.6 1421.0,178.8 1422.0,177.4 1423.0,177.1 1424.0,182.4 1425.0,180.4 1426.0,184.9 1427.0,179.1 1428.0,181.1 1429.0,179.4 1430.0,178.0 1431.0,181.9 1432.0,180.9 1433.0,182.5 1434.0,180.0 1435.0,176.4 1436.0,179.3 1437.0,181.4 1438.0,183.3 1439.0,177.9 1440.0,178.3 1441.0,174.7 1442.0,180.7 1443.0,175.7 1444.0,173.3 1445.0,179.7 1446.0,183.3 1447.0,175.0 1448.0,174.8 1449.0,176.1 1450.0,176.1 1451.0,180.4 1452.0,177.3 1453.0,177.7 1454.0,181.5 1455.0,178.5 1456.0,180.7 1457.0,176.4 1458.0,173.9 1459.0,174.3 1460.0,185.6 1461.0,181.0 1462.0,181.1 1463.0,180.7 1464.0,181.1 1465.0,182.3 1466.0,187.2 1467.0,177.0 1468.0,173.3 1469.0,174.6 1470.0,175.4 1471.0,182.8 1472.0,183.3 1473.0,176.6 1474.0,174.4 1475.0,179.2 1476.0,183.1 1477.0,173.3 1478.0,179.4 1479.0,177.8 1480.0,182.6 1481.0,177.2 1482.0,177.4 1483.0,174.0 1484.0,176.8 1485.0,185.4 1486.0,184.3 1487.0,179.0 1488.0,175.5 1489.0,173.3 1490.0,177.6 1491.0,180.0 1492.0,180.1 1493.0,179.2 1494.0,176.3 1495.0,179.4 1496.0,181.3 1497.0,187.1 1498.0,190.3 1499.0,180.9 1500.0,177.6 1501.0,179.2 1502.0,177.7 1503.0,177.3 1504.0,178.9 1505.0,177.1 1506.0,181.8 1507.0,180.8 1508.0,181.2 1509.0,179.5 1510.0,177.0 1511.0,176.3 1512.0,178.5 1513.0,178.5 1514.0,180.9 1515.0,179.6 1516.0,175.6 1517.0,178.6 1518.0,175.2 1519.0,177.0 1520.0,177.3 1521.0,173.3 1522.0,179.3 1523.0,181.0 1524.0,179.7 1525.0,178.5 1526.0,178.0 1527.0,176.4 1528.0,178.3 1529.0,178.3 1530.0,179.5 1531.0,176.4 1532.0,180.5 1533.0,181.1 1534.0,179.8 1535.0,179.2 1536.0,180.9 1537.0,175.2 1538.0,181.1 1539.0,182.0 1540.0,182.0 1541.0,181.6 1542.0,178.2 1543.0,179.5 1544.0,183.0 1545.0,182.7 1546.0,180.4 1547.0,175.6 1548.0,182.2 1549.0,186.0 1550.0,185.3 1551.0,180.9 1552.0,175.7 1553.0,182.6 1554.0,178.7 1555.0,173.3 1556.0,178.7 1557.0,174.3 1558.0,174.1 1559.0,178.2 1560.0,184.4 1561.0,180.4 1562.0,182.6 1563.0,190.6 1564.0,189.1 1565.0,181.2 1566.0,178.6 1567.0,175.2 1568.0,177.3 1569.0,181.8 1570.0,182.4 1571.0,182.0 1572.0,183.6 1573.0,178.4 1574.0,180.3 1575.0,183.6 1576.0,184.0 1577.0,185.2 1578.0,182.5 1579.0,180.0 1580.0,180.8 1581.0,175.8 1582.0,174.2 1583.0,181.3 1584.0,181.0 1585.0,180.3 1586.0,174.3 1587.0,177.4 1588.0,177.4 1589.0,175.1 1590.0,173.3 1591.0,178.2 1592.0,183.8 1593.0,182.1 1594.0,178.6 1595.0,180.6 1596.0,181.1 1597.0,173.3 1598.0,178.3 1599.0,182.9 1600.0,184.7 1601.0,190.1 1602.0,186.2 1603.0,182.8 1604.0,182.5 1605.0,183.2 1606.0,179.1 1607.0,180.6 1608.0,185.3 1609.0,190.3 1610.0,181.4 1611.0,180.4 1612.0,182.2 1613.0,185.5 1614.0,182.6 1615.0,185.1 1616.0,178.0 1617.0,178.9 1618.0,180.2 1619.0,184.0 1620.0,183.7 1621.0,175.1 1622.0,176.2 1623.0,180.5 1624.0,177.2 1625.0,175.2 1626.0,183.5 1627.0,183.5 1628.0,182.3 1629.0,180.0 1630.0,183.7 1631.0,181.3 1632.0,183.6 1633.0,177.4 1634.0,176.8 1635.0,180.0 1636.0,178.6 1637.0,182.6 1638.0,181.3 1639.0,177.4 1640.0,179.8 1641.0,180.0 1642.0,183.1 1643.0,178.6 1644.0,179.4 1645.0,186.4 1646.0,196.4 1647.0,193.1 1648.0,182.5 1649.0,182.5 1650.0,186.2 1651.0,180.5 1652.0,176.9 1653.0,180.5 1654.0,181.6 1655.0,176.5 1656.0,173.3 1657.0,174.5 1658.0,181.2 1659.0,178.1 1660.0,179.6 1661.0,181.6 1662.0,182.7 1663.0,180.2 1664.0,181.4 1665.0,177.4 1666.0,177.7 1667.0,177.4 1668.0,183.8 1669.0,180.7 1670.0,177.5 1671.0,178.5 1672.0,180.0 1673.0,181.6 1674.0,174.4 1675.0,175.2 1676.0,180.3 1677.0,194.4 1678.0,185.9 1679.0,181.4 1680.0,184.6 1681.0,190.7 1682.0,181.0 1683.0,179.9 1684.0,185.0 1685.0,183.8 1686.0,182.9 1687.0,180.7 1688.0,190.8 1689.0,191.3 1690.0,184.4 1691.0,181.9 1692.0,174.1 1693.0,181.1 1694.0,180.6 1695.0,182.5 1696.0,183.1 1697.0,178.5 1698.0,174.4 1699.0,179.9 1700.0,177.8 1701.0,178.2 1702.0,177.8 1703.0,177.0 1704.0,173.3 1705.0,183.3 1706.0,183.2 1707.0,186.4 1708.0,191.1 1709.0,180.7 1710.0,173.3 1711.0,174.9 1712.0,175.0 1713.0,177.8 1714.0,178.8 1715.0,173.5 1716.0,179.0 1717.0,175.5 1718.0,180.3 1719.0,180.1 1720.0,179.2 1721.0,179.6 1722.0,180.0 1723.0,190.0 1724.0,200.0 1725.0,210.0 1726.0,214.6 1727.0,214.8 1728.0,212.1 1729.0,208.8 1730.0,205.5 1731.0,208.3 1732.0,205.0 1733.0,203.3 1734.0,202.1 1735.0,201.8 1736.0,200.2 1737.0,199.4 1738.0,196.8 1739.0,198.5 1740.0,203.2 1741.0,198.1 1742.0,196.1 1743.0,197.1 1744.0,196.2 1745.0,191.6 1746.0,192.6 1747.0,194.6 1748.0,192.8 1749.0,192.0 1750.0,193.4 1751.0,188.4 1752.0,188.0 1753.0,187.2 1754.0,189.1 1755.0,181.7 1756.0,182.3 1757.0,183.1 1758.0,185.2 1759.0,185.3 1760.0,184.8 1761.0,178.5 1762.0,181.2 1763.0,178.9 1764.0,177.3 1765.0,178.5 1766.0,174.2 1767.0,171.7 1768.0,172.9 1769.0,170.7 1770.0,171.9 1771.0,173.9 1772.0,174.2 1773.0,175.5 1774.0,170.3 1775.0,165.8 1776.0,166.1 1777.0,165.2 1778.0,164.4 1779.0,166.9 1780.0,163.7 1781.0,160.5 1782.0,162.3 1783.0,161.6 1784.0,162.9 1785.0,162.7 1786.0,164.5 1787.0,163.3 1788.0,168.0 1789.0,165.1 1790.0,164.0 1791.0,162.0 1792.0,153.6 1793.0,158.2 1794.0,159.7 1795.0,160.3 1796.0,155.9 1797.0,168.2 1798.0,162.0 1799.0,152.8 1800.0,150.6 1801.0,157.5 1802.0,159.4 1803.0,157.2 1804.0,159.9 1805.0,158.3 1806.0,162.4 1807.0,157.8 1808.0,161.1 1809.0,169.0 1810.0,179.3 1811.0,158.1 1812.0,156.5 1813.0,156.9 1814.0,162.9 1815.0,155.3 1816.0,157.1 1817.0,159.2 1818.0,154.7 1819.0,154.3 1820.0,155.0 1821.0,150.6 1822.0,150.6 1823.0,157.4 1824.0,161.1 1825.0,158.2 1826.0,150.9 1827.0,157.5 1828.0,165.3 1829.0,164.8" fill="none" stroke="#e6e6e6" stroke-width="1.4" stroke-linejoin="round"/>
<rect x="979.9" y="41" width="2" height="224.4" fill="#d04848"/>
<rect x="1404.6" y="42" width="1.2" height="222.4" fill="#e6e64a"/>
<rect x="1374" y="466" width="61" height="354" fill="#404040"/>
<rect x="1393.00" y="466" width="1" height="354" fill="#8a8a8a"/>
<rect x="1424.80" y="466" width="1" height="354" fill="#8a8a8a"/>
<rect x="1456.60" y="466" width="1" height="354" fill="#8a8a8a"/>
<rect x="1488.40" y="466" width="1" height="354" fill="#8a8a8a"/>
<rect x="1520.20" y="466" width="1" height="354" fill="#8a8a8a"/>
<rect x="1552.00" y="466" width="1" height="354" fill="#8a8a8a"/>
<rect x="1583.80" y="466" width="1" height="354" fill="#8a8a8a"/>
<rect x="1615.60" y="466" width="1" height="354" fill="#8a8a8a"/>
<rect x="1647.40" y="466" width="1" height="354" fill="#8a8a8a"/>
<rect x="1679.20" y="466" width="1" height="354" fill="#8a8a8a"/>
<rect x="1711.00" y="466" width="1" height="354" fill="#8a8a8a"/>
<rect x="1742.80" y="466" width="1" height="354" fill="#8a8a8a"/>
<rect x="1774.60" y="466" width="1" height="354" fill="#8a8a8a"/>
<rect x="1806.40" y="466" width="1" height="354" fill="#8a8a8a"/>
<rect x="1838.20" y="466" width="1" height="354" fill="#8a8a8a"/>
<rect x="1372" y="536.26" width="474.4" height="1" fill="#8a8a8a"/>
<rect x="1372" y="607.12" width="474.4" height="1" fill="#8a8a8a"/>
<rect x="1372" y="677.98" width="474.4" height="1" fill="#8a8a8a"/>
<rect x="1372" y="748.84" width="474.4" height="1" fill="#8a8a8a"/>
<rect x="1372" y="466" width="474.4" height="354" fill="none" stroke="#9a9a9a" stroke-width="1.6"/>
<polyline points="1374.50,781.1 1375.35,803.3 1376.20,771.2 1377.05,808.8 1377.90,776.6 1378.75,810.3 1379.60,759.7 1380.45,808.9 1381.30,763.8 1382.15,813.2 1383.00,766.9 1383.85,798.3 1384.70,782.2 1385.55,815.0 1386.40,769.3 1387.25,817.0 1388.10,781.2 1388.95,801.2 1389.80,763.1 1390.65,810.6 1391.50,804.4 1392.35,817.7 1393.20,779.8 1394.05,812.3 1394.90,761.6 1395.75,799.7 1396.60,768.6 1397.45,798.2 1398.30,750.7 1399.15,816.8 1400.00,769.2 1400.85,816.5 1401.70,777.8 1402.55,799.2 1403.40,793.0 1404.25,815.8 1405.10,773.6 1405.95,805.7 1406.80,786.1 1407.65,819.7 1408.50,783.9 1409.35,814.4 1410.20,781.8 1411.05,809.3 1411.90,780.3 1412.75,809.9 1413.60,781.1 1414.45,798.2 1415.30,770.7 1416.15,818.5 1417.00,777.4 1417.85,814.8 1418.70,764.1 1419.55,815.7 1420.40,743.7 1421.25,798.9 1422.10,769.6 1422.95,801.2 1423.80,778.6 1424.65,813.1 1425.50,798.5 1426.35,810.3 1427.20,780.7 1428.05,810.7 1428.90,777.4 1429.75,818.3 1430.60,764.8 1431.45,809.5 1432.30,779.5 1433.15,805.8 1434.00,787.3 1434.85,817.7 1435.70,767.4 1436.55,813.2 1437.40,777.9 1438.25,803.4 1439.10,765.5 1439.95,804.9 1440.80,789.7 1441.65,813.2 1442.50,762.6 1443.35,798.8 1444.20,760.9 1445.05,810.1 1445.90,789.9 1446.75,801.7 1447.60,772.5 1448.45,806.6 1449.30,775.1 1450.15,814.4 1451.00,755.5 1451.85,797.7 1452.70,770.1 1453.55,796.6 1454.40,787.4 1455.25,811.4 1456.10,780.0 1456.95,805.3 1457.80,764.6 1458.65,811.1 1459.50,779.5 1460.35,804.8 1461.20,785.8 1462.05,815.7 1462.90,776.7 1463.75,809.5 1464.60,762.5 1465.45,807.7 1466.30,747.1 1467.15,813.9 1468.00,755.2 1468.85,814.4 1469.70,751.0 1470.55,808.6 1471.40,802.7 1472.25,808.6 1473.10,763.8 1473.95,814.6 1474.80,759.8 1475.65,795.3 1476.50,760.1 1477.35,801.0 1478.20,763.3 1479.05,796.0 1479.90,789.1 1480.75,786.2 1481.60,767.1 1482.45,795.1 1483.30,751.3 1484.15,780.1 1485.00,739.0 1485.85,783.1 1486.70,754.2 1487.55,778.8 1488.40,740.5 1489.25,785.2 1490.10,726.0 1490.95,786.5 1491.80,718.2 1492.65,787.5 1493.50,746.6 1494.35,783.4 1495.20,734.6 1496.05,799.9 1496.90,757.5 1497.75,797.5 1498.60,757.7 1499.45,787.7 1500.30,749.1 1501.15,790.1 1502.00,761.2 1502.85,798.8 1503.70,766.1 1504.55,807.3 1505.40,779.7 1506.25,798.6 1507.10,770.7 1507.95,816.3 1508.80,763.9 1509.65,811.6 1510.50,783.7 1511.35,819.1 1512.20,778.2 1513.05,799.8 1513.90,783.5 1514.75,805.9 1515.60,782.9 1516.45,815.0 1517.30,774.6 1518.15,803.2 1519.00,789.9 1519.85,816.4 1520.70,776.1 1521.55,811.6 1522.40,804.5 1523.25,818.6 1524.10,808.6 1524.95,810.1 1525.80,757.7 1526.65,811.5 1527.50,770.9 1528.35,811.7 1529.20,775.8 1530.05,809.0 1530.90,780.7 1531.75,802.3 1532.60,754.6 1533.45,809.0 1534.30,775.7 1535.15,801.1 1536.00,766.1 1536.85,797.7 1537.70,759.4 1538.55,798.2 1539.40,745.7 1540.25,799.2 1541.10,776.6 1541.95,810.8 1542.80,780.9 1543.65,809.7 1544.50,782.2 1545.35,805.1 1546.20,777.9 1547.05,802.8 1547.90,763.9 1548.75,805.9 1549.60,792.2 1550.45,819.2 1551.30,765.8 1552.15,813.9 1553.00,789.1 1553.85,815.6 1554.70,766.2 1555.55,810.8 1556.40,791.7 1557.25,804.9 1558.10,782.2 1558.95,808.8 1559.80,758.0 1560.65,796.0 1561.50,747.2 1562.35,810.1 1563.20,750.4 1564.05,800.2 1564.90,757.8 1565.75,805.7 1566.60,784.4 1567.45,806.0 1568.30,778.7 1569.15,813.1 1570.00,758.3 1570.85,802.4 1571.70,795.1 1572.55,819.0 1573.40,782.8 1574.25,815.2 1575.10,775.0 1575.95,797.3 1576.80,760.8 1577.65,805.2 1578.50,773.2 1579.35,813.8 1580.20,768.5 1581.05,793.4 1581.90,783.3 1582.75,805.8 1583.60,762.3 1584.45,813.5 1585.30,786.4 1586.15,801.7 1587.00,729.8 1587.85,804.8 1588.70,775.5 1589.55,814.9 1590.40,768.9 1591.25,804.5 1592.10,782.7 1592.95,810.0 1593.80,782.5 1594.65,819.0 1595.50,768.4 1596.35,812.6 1597.20,783.6 1598.05,812.8 1598.90,775.5 1599.75,806.6 1600.60,773.4 1601.45,809.6 1602.30,760.4 1603.15,805.3 1604.00,754.8 1604.85,802.7 1605.70,756.6 1606.55,799.5 1607.40,741.6 1608.25,784.8 1609.10,733.9 1609.95,802.4 1610.80,766.6 1611.65,796.2 1612.50,771.0 1613.35,793.4 1614.20,777.3 1615.05,803.0 1615.90,783.1 1616.75,806.5 1617.60,786.0 1618.45,814.7 1619.30,778.5 1620.15,813.3 1621.00,770.0 1621.85,802.4 1622.70,790.3 1623.55,815.4 1624.40,775.4 1625.25,813.1 1626.10,765.2 1626.95,811.8 1627.80,761.8 1628.65,805.2 1629.50,775.0 1630.35,801.2 1631.20,788.6 1632.05,810.1 1632.90,779.3 1633.75,814.7 1634.60,780.9 1635.45,818.5 1636.30,747.2 1637.15,805.4 1638.00,781.7 1638.85,813.9 1639.70,773.9 1640.55,811.0 1641.40,786.9 1642.25,818.0 1643.10,803.0 1643.95,817.7 1644.80,772.5 1645.65,800.5 1646.50,776.2 1647.35,800.1 1648.20,779.6 1649.05,814.9 1649.90,788.3 1650.75,810.1 1651.60,805.5 1652.45,798.9 1653.30,757.4 1654.15,812.8 1655.00,784.7 1655.85,819.7 1656.70,785.2 1657.55,818.3 1658.40,780.9 1659.25,804.9 1660.10,781.1 1660.95,801.5 1661.80,782.1 1662.65,812.8 1663.50,787.7 1664.35,799.6 1665.20,771.0 1666.05,812.3 1666.90,786.9 1667.75,799.3 1668.60,763.6 1669.45,818.1 1670.30,760.5 1671.15,805.4 1672.00,782.4 1672.85,807.5 1673.70,799.1 1674.55,799.8 1675.40,787.4 1676.25,815.7 1677.10,804.4 1677.95,812.5 1678.80,780.3 1679.65,815.2 1680.50,766.1 1681.35,798.6 1682.20,782.7 1683.05,813.5 1683.90,774.4 1684.75,817.9 1685.60,748.6 1686.45,801.6 1687.30,780.5 1688.15,807.0 1689.00,792.1 1689.85,804.7 1690.70,774.2 1691.55,811.5 1692.40,776.8 1693.25,813.6 1694.10,770.8 1694.95,800.1 1695.80,785.0 1696.65,812.1 1697.50,784.7 1698.35,809.2 1699.20,771.0 1700.05,812.3 1700.90,763.0 1701.75,812.5 1702.60,760.9 1703.45,799.2 1704.30,801.4 1705.15,802.2 1706.00,751.1 1706.85,803.9 1707.70,767.2 1708.55,801.6 1709.40,793.0 1710.25,804.4 1711.10,770.7 1711.95,813.9 1712.80,767.0 1713.65,815.3 1714.50,775.2 1715.35,810.3 1716.20,789.5 1717.05,802.9 1717.90,793.8 1718.75,799.3 1719.60,763.3 1720.45,813.6 1721.30,795.9 1722.15,800.3 1723.00,763.3 1723.85,812.7 1724.70,776.7 1725.55,801.6 1726.40,789.9 1727.25,802.3 1728.10,786.8 1728.95,809.7 1729.80,777.5 1730.65,811.5 1731.50,788.9 1732.35,805.9 1733.20,781.3 1734.05,808.3 1734.90,789.9 1735.75,808.2 1736.60,780.7 1737.45,798.2 1738.30,769.9 1739.15,819.2 1740.00,762.3 1740.85,808.3 1741.70,788.4 1742.55,801.9 1743.40,772.9 1744.25,804.3 1745.10,760.4 1745.95,808.2 1746.80,765.2 1747.65,801.9 1748.50,777.7 1749.35,800.0 1750.20,796.5 1751.05,802.7 1751.90,757.7 1752.75,812.2 1753.60,762.8 1754.45,812.7 1755.30,756.0 1756.15,814.9 1757.00,781.4 1757.85,817.6 1758.70,778.8 1759.55,810.6 1760.40,787.4 1761.25,813.7 1762.10,757.5 1762.95,803.4 1763.80,776.4 1764.65,806.9 1765.50,777.4 1766.35,807.7 1767.20,780.8 1768.05,814.1 1768.90,802.3 1769.75,804.9 1770.60,788.4 1771.45,798.8 1772.30,777.4 1773.15,814.6 1774.00,790.6 1774.85,802.1 1775.70,758.2 1776.55,799.8 1777.40,776.4 1778.25,808.4 1779.10,760.0 1779.95,799.8 1780.80,779.6 1781.65,806.7 1782.50,802.7 1783.35,807.4 1784.20,742.2 1785.05,800.1 1785.90,762.3 1786.75,803.8 1787.60,793.8 1788.45,818.5 1789.30,797.3 1790.15,809.8 1791.00,776.1 1791.85,813.5 1792.70,774.2 1793.55,801.9 1794.40,790.7 1795.25,813.6 1796.10,779.1 1796.95,801.3 1797.80,798.3 1798.65,801.9 1799.50,786.9 1800.35,813.3 1801.20,798.9 1802.05,805.6 1802.90,777.4 1803.75,800.7 1804.60,751.9 1805.45,803.6 1806.30,789.5 1807.15,811.5 1808.00,783.0 1808.85,800.3 1809.70,756.1 1810.55,799.8 1811.40,796.2 1812.25,816.3 1813.10,775.3 1813.95,813.3 1814.80,799.2 1815.65,809.1 1816.50,772.5 1817.35,803.4 1818.20,773.4 1819.05,816.8 1819.90,772.0 1820.75,802.4 1821.60,784.4 1822.45,800.9 1823.30,788.0 1824.15,811.9 1825.00,784.0 1825.85,816.1 1826.70,757.9 1827.55,814.9 1828.40,743.4 1829.25,811.6 1830.10,766.6 1830.95,809.7 1831.80,766.2 1832.65,805.7 1833.50,796.3 1834.35,800.5 1835.20,790.0 1836.05,800.3 1836.90,740.4 1837.75,802.4 1838.60,754.5 1839.45,808.4 1840.30,759.5 1841.15,806.8 1842.00,758.2 1842.85,802.7 1843.70,796.8 1844.55,801.7 1845.40,810.8" fill="none" stroke="#ececec" stroke-width="0.9"/>
<rect x="1372.70" y="730" width="1.6" height="82" fill="#ff9090"/>
<rect x="1448.20" y="656" width="1.6" height="156" fill="#eeeeee"/>
<rect x="1462.20" y="670" width="1.6" height="142" fill="#eeeeee"/>
<rect x="1488.20" y="596" width="1.6" height="216" fill="#f4f4f4"/>
<rect x="1503.20" y="710" width="1.6" height="102" fill="#eeeeee"/>
<rect x="1538.20" y="703" width="1.6" height="109" fill="#eeeeee"/>
<rect x="1561.60" y="669" width="1.6" height="143" fill="#eeeeee"/>
<rect x="1580.20" y="667" width="1.6" height="145" fill="#eeeeee"/>
<rect x="1603.20" y="683" width="1.6" height="129" fill="#eeeeee"/>
<rect x="1607.20" y="645" width="1.6" height="167" fill="#f4f4f4"/>
<rect x="1613.20" y="726" width="1.6" height="86" fill="#eeeeee"/>
<rect x="1688.20" y="735" width="1.6" height="77" fill="#e0e0e0"/>
<rect x="1763.20" y="734" width="1.6" height="78" fill="#e0e0e0"/>
<rect x="1839.80" y="733" width="1.6" height="79" fill="#e0e0e0"/>
<rect x="1485.20" y="672" width="1.6" height="140" fill="#e8e8e8"/>
<rect x="1491.20" y="690" width="1.6" height="122" fill="#e8e8e8"/>
<rect x="1434.3" y="644" width="1.6" height="176" fill="#f0f0a0"/>
<line x1="1435.2" y1="466" x2="1435.2" y2="820" stroke="#e8e840" stroke-width="1" stroke-dasharray="1.5,1.5"/>
<rect x="1372" y="466" width="2" height="354" fill="#c03030"/>
<circle cx="1436" cy="683.2" r="6.2" fill="#1ba0d2"/>
<circle cx="1489" cy="629.7" r="6.6" fill="#f2f21a"/>
<circle cx="1562.4" cy="669" r="6.4" fill="#6a2ad0"/>
<circle cx="1608" cy="645" r="6.2" fill="#e01010"/>
<circle cx="56.6" cy="86.4" r="3.5" fill="#f2f21e"/>
<circle cx="171" cy="86.4" r="3.5" fill="#f2f21e"/>
<circle cx="285.1" cy="86.4" r="3.5" fill="#f2f21e"/>
<text x="902.54" y="10.70" font-size="21" fill="#ffffff" textLength="89.49" lengthAdjust="spacingAndGlyphs">Frontend</text>
<text x="15.90" y="88.50" font-size="54.5" fill="#f2f21e">0</text>
<text x="68.20" y="88.50" font-size="54.5" fill="#f2f21e">2</text>
<text x="99.60" y="88.50" font-size="54.5" fill="#f2f21e">2</text>
<text x="130.90" y="88.50" font-size="54.5" fill="#f2f21e">9</text>
<text x="182.40" y="88.50" font-size="54.5" fill="#f2f21e">0</text>
<text x="214.50" y="88.50" font-size="54.5" fill="#f2f21e">7</text>
<text x="246.00" y="88.50" font-size="54.5" fill="#f2f21e">2</text>
<text x="296.90" y="88.50" font-size="54.5" fill="#f2f21e">0</text>
<text x="328.20" y="88.50" font-size="54.5" fill="#f2f21e">0</text>
<text x="358.80" y="88.50" font-size="54.5" fill="#f2f21e">0</text>
<text x="396.89" y="88.80" font-size="53.8" fill="#f2f21e" textLength="62.62" lengthAdjust="spacingAndGlyphs">Hz</text>
<text x="15.70" y="148.00" font-size="22.5" fill="#e8141a" textLength="185.72" lengthAdjust="spacingAndGlyphs">43 ppm Correction</text>
<text x="24.53" y="211.60" font-size="26.5" fill="#dedede" textLength="130.09" lengthAdjust="spacingAndGlyphs">Connection</text>
<text x="192.24" y="211.60" font-size="26.5" fill="#dedede" textLength="101.60" lengthAdjust="spacingAndGlyphs">Recorder</text>
<text x="331.00" y="211.60" font-size="26.5" fill="#ffffff" textLength="84.76" lengthAdjust="spacingAndGlyphs">FC0013</text>
<text x="24.40" y="269.00" font-size="26.5" fill="#ffffff" textLength="51.12" lengthAdjust="spacingAndGlyphs">AGC</text>
<text x="189.82" y="271.20" font-size="26" fill="#ffffff" textLength="74.22" lengthAdjust="spacingAndGlyphs">On/Off</text>
<text x="23.43" y="327.50" font-size="26.5" fill="#ffffff" textLength="54.39" lengthAdjust="spacingAndGlyphs">Gain</text>
<text x="590.60" y="52.90" font-size="18.5" fill="#ffffff" textLength="51.55" lengthAdjust="spacingAndGlyphs">Freeze</text>
<text x="698.60" y="52.90" font-size="18.5" fill="#ffffff" textLength="67.43" lengthAdjust="spacingAndGlyphs">Gradient</text>
<text x="573.40" y="115.20" font-size="19" fill="#ffffff" textLength="133.35" lengthAdjust="spacingAndGlyphs">Smoothing Level</text>
<text x="573.00" y="211.00" font-size="19" fill="#ffffff" textLength="61.70" lengthAdjust="spacingAndGlyphs">Zoom X</text>
<text x="573.00" y="301.40" font-size="19" fill="#ffffff" textLength="61.70" lengthAdjust="spacingAndGlyphs">Zoom Y</text>
<text x="926.71" y="47.10" font-size="21" fill="#ffffff" textLength="39.24" lengthAdjust="spacingAndGlyphs">40.0</text>
<text x="926.71" y="93.30" font-size="21" fill="#ffffff" textLength="39.24" lengthAdjust="spacingAndGlyphs">20.0</text>
<text x="937.93" y="138.00" font-size="21" fill="#ffffff" textLength="28.03" lengthAdjust="spacingAndGlyphs">0.0</text>
<text x="920.00" y="182.90" font-size="21" fill="#ffffff" textLength="45.95" lengthAdjust="spacingAndGlyphs">-20.0</text>
<text x="920.00" y="227.90" font-size="21" fill="#ffffff" textLength="45.95" lengthAdjust="spacingAndGlyphs">-40.0</text>
<text x="920.00" y="272.80" font-size="21" fill="#ffffff" textLength="45.95" lengthAdjust="spacingAndGlyphs">-60.0</text>
<text x="1018.05" y="288.90" font-size="20.8" fill="#ffffff" textLength="50.48" lengthAdjust="spacingAndGlyphs">228.2</text>
<text x="1100.85" y="288.90" font-size="20.8" fill="#ffffff" textLength="50.48" lengthAdjust="spacingAndGlyphs">228.4</text>
<text x="1183.65" y="288.90" font-size="20.8" fill="#ffffff" textLength="50.48" lengthAdjust="spacingAndGlyphs">228.6</text>
<text x="1266.45" y="288.90" font-size="20.8" fill="#ffffff" textLength="50.48" lengthAdjust="spacingAndGlyphs">228.8</text>
<text x="1357.66" y="288.90" font-size="20.8" fill="#ffffff" textLength="33.66" lengthAdjust="spacingAndGlyphs">229</text>
<text x="1432.05" y="288.90" font-size="20.8" fill="#ffffff" textLength="50.48" lengthAdjust="spacingAndGlyphs">229.2</text>
<text x="1514.85" y="288.90" font-size="20.8" fill="#ffffff" textLength="50.48" lengthAdjust="spacingAndGlyphs">229.4</text>
<text x="1597.65" y="288.90" font-size="20.8" fill="#ffffff" textLength="50.48" lengthAdjust="spacingAndGlyphs">229.6</text>
<text x="1680.45" y="288.90" font-size="20.8" fill="#ffffff" textLength="50.48" lengthAdjust="spacingAndGlyphs">229.8</text>
<text x="1771.66" y="288.90" font-size="20.8" fill="#ffffff" textLength="33.66" lengthAdjust="spacingAndGlyphs">230</text>
<text x="1312.89" y="320.80" font-size="23.5" fill="#ffffff" textLength="182.94" lengthAdjust="spacingAndGlyphs">Frequency (MHz)</text>
<text x="-234.64" y="0.00" font-size="22.5" fill="#ffffff" textLength="159.75" lengthAdjust="spacingAndGlyphs" transform="translate(885.6,0) rotate(-90)">Magnitude (dB)</text>
<text x="15.70" y="389.40" font-size="23.5" fill="#ffffff" textLength="61.21" lengthAdjust="spacingAndGlyphs" font-style="italic">DAB+</text>
<text x="103.25" y="384.90" font-size="19.5" fill="#ffffff" textLength="33.93" lengthAdjust="spacingAndGlyphs">12D</text>
<text x="229.35" y="386.00" font-size="22.5" fill="#f26b6b" textLength="92.64" lengthAdjust="spacingAndGlyphs">EId: F201</text>
<text x="354.04" y="386.00" font-size="22.5" fill="#ff8a1e" textLength="31.24" lengthAdjust="spacingAndGlyphs">Rik</text>
<text x="386.50" y="386.00" font-size="22.5" fill="#d8e02a" textLength="9.72" lengthAdjust="spacingAndGlyphs">s</text>
<text x="425.38" y="386.70" font-size="23.5" fill="#ffffff" textLength="122.79" lengthAdjust="spacingAndGlyphs">2023-09-06</text>
<text x="561.63" y="386.70" font-size="23.5" fill="#ffffff" textLength="108.91" lengthAdjust="spacingAndGlyphs">20:45:55 Z</text>
<text x="1047.69" y="387.40" font-size="23.5" fill="#ffffff" textLength="94.03" lengthAdjust="spacingAndGlyphs">SId: F33F</text>
<text x="1186.76" y="387.40" font-size="37" fill="#f4f41e" textLength="193.62" lengthAdjust="spacingAndGlyphs">NORSK POP</text>
<text x="1424.80" y="388.10" font-size="24" fill="#ffffff" textLength="82.90" lengthAdjust="spacingAndGlyphs">48 kbps</text>
<text x="1523.21" y="388.10" font-size="24" fill="#ffffff" textLength="81.49" lengthAdjust="spacingAndGlyphs">EEP 3-A</text>
<text x="1799.25" y="383.10" font-size="19.5" fill="#ffffff" textLength="37.90" lengthAdjust="spacingAndGlyphs">DAB</text>
<text x="6.75" y="441.70" font-size="29.5" fill="#f4f41e" textLength="162.07" lengthAdjust="spacingAndGlyphs">NORSK POP</text>
<text x="8.30" y="488.70" font-size="24.5" fill="#ffffff" textLength="153.50" lengthAdjust="spacingAndGlyphs">KISS N&#39;DANCE</text>
<text x="8.33" y="526.70" font-size="24.5" fill="#ffffff" textLength="129.18" lengthAdjust="spacingAndGlyphs">NORSK POP</text>
<text x="8.34" y="564.60" font-size="24.5" fill="#ffffff" textLength="127.27" lengthAdjust="spacingAndGlyphs">NRJ NORGE</text>
<text x="8.33" y="603.00" font-size="24.5" fill="#ffffff" textLength="96.07" lengthAdjust="spacingAndGlyphs">P0DPLAY</text>
<text x="8.19" y="640.50" font-size="24.5" fill="#ffffff" textLength="130.20" lengthAdjust="spacingAndGlyphs">P10 Country</text>
<text x="8.20" y="677.60" font-size="24.5" fill="#ffffff" textLength="116.20" lengthAdjust="spacingAndGlyphs">P24-7 FUN</text>
<text x="8.29" y="715.50" font-size="24.5" fill="#ffffff" textLength="112.22" lengthAdjust="spacingAndGlyphs">P24-7 KOS</text>
<text x="8.18" y="753.20" font-size="24.5" fill="#ffffff" textLength="111.35" lengthAdjust="spacingAndGlyphs">P24-7 MIX</text>
<text x="8.18" y="792.00" font-size="24.5" fill="#ffffff" textLength="189.62" lengthAdjust="spacingAndGlyphs">P4 LydenAvNorge</text>
<text x="8.20" y="829.80" font-size="24.5" fill="#ffffff" textLength="74.94" lengthAdjust="spacingAndGlyphs">P5 Hits</text>
<text x="8.29" y="867.60" font-size="24.5" fill="#ffffff" textLength="83.83" lengthAdjust="spacingAndGlyphs">P6 Rock</text>
<text x="8.23" y="905.60" font-size="24.5" fill="#ffffff" textLength="86.69" lengthAdjust="spacingAndGlyphs">P7 Klem</text>
<text x="307.52" y="441.40" font-size="29.5" fill="#ffffff" textLength="194.94" lengthAdjust="spacingAndGlyphs">Service Quality</text>
<text x="315.80" y="501.40" font-size="20" fill="#ffffff" textLength="81.33" lengthAdjust="spacingAndGlyphs">SNR (dB)</text>
<text x="314.82" y="548.00" font-size="20" fill="#ffffff" textLength="93.32" lengthAdjust="spacingAndGlyphs">FIC (ok %)</text>
<text x="314.83" y="593.80" font-size="20" fill="#ffffff" textLength="88.00" lengthAdjust="spacingAndGlyphs">RS (ok %)</text>
<text x="314.75" y="639.70" font-size="20" fill="#ffffff" textLength="112.32" lengthAdjust="spacingAndGlyphs">Null Symbol</text>
<text x="315.80" y="686.20" font-size="20" fill="#ffffff" textLength="158.37" lengthAdjust="spacingAndGlyphs">SymbolTime (ms)</text>
<text x="314.79" y="731.40" font-size="20" fill="#ffffff" textLength="148.48" lengthAdjust="spacingAndGlyphs">FrameTime (ms)</text>
<text x="508.96" y="499.70" font-size="17.5" fill="#f0f0dc" textLength="32.03" lengthAdjust="spacingAndGlyphs">10,1</text>
<text x="510.52" y="546.80" font-size="17.5" fill="#f0f0dc" textLength="28.72" lengthAdjust="spacingAndGlyphs">100</text>
<text x="516.10" y="592.70" font-size="17.5" fill="#f0f0dc" textLength="19.33" lengthAdjust="spacingAndGlyphs">76</text>
<text x="508.50" y="684.40" font-size="17.5" fill="#f0f0dc" textLength="32.29" lengthAdjust="spacingAndGlyphs">0,41</text>
<text x="508.50" y="730.30" font-size="17.5" fill="#f0f0dc" textLength="33.42" lengthAdjust="spacingAndGlyphs">95,8</text>
<text x="658.00" y="450.40" font-size="26" fill="#e2e2e2" textLength="48.91" lengthAdjust="spacingAndGlyphs">AAC</text>
<text x="845.71" y="450.20" font-size="26" fill="#e2e2e2" textLength="88.69" lengthAdjust="spacingAndGlyphs">Options</text>
<text x="633.11" y="498.90" font-size="26" fill="#e2e2e2" textLength="51.59" lengthAdjust="spacingAndGlyphs">Sync</text>
<text x="775.90" y="498.90" font-size="26" fill="#ffffff" textLength="26.76" lengthAdjust="spacingAndGlyphs">TII</text>
<text x="893.30" y="498.90" font-size="26" fill="#e2e2e2" textLength="66.66" lengthAdjust="spacingAndGlyphs">Audio</text>
<text x="598.64" y="599.90" font-size="23" fill="#ffffff" textLength="71.02" lengthAdjust="spacingAndGlyphs">Pattern</text>
<text x="698.89" y="599.90" font-size="23" fill="#ffffff" textLength="69.40" lengthAdjust="spacingAndGlyphs">MainId</text>
<text x="798.04" y="599.90" font-size="23" fill="#ffffff" textLength="57.72" lengthAdjust="spacingAndGlyphs">SubId</text>
<text x="885.52" y="599.90" font-size="23" fill="#ffffff" textLength="84.95" lengthAdjust="spacingAndGlyphs">Strength</text>
<text x="601.70" y="644.70" font-size="21.5" fill="#ffffff" textLength="42.66" lengthAdjust="spacingAndGlyphs">0x65</text>
<text x="701.67" y="644.70" font-size="21.5" fill="#ffffff" textLength="22.29" lengthAdjust="spacingAndGlyphs">26</text>
<text x="801.20" y="644.70" font-size="21.5" fill="#ffffff" textLength="10.76" lengthAdjust="spacingAndGlyphs">8</text>
<text x="888.70" y="644.70" font-size="21.5" fill="#ffffff" textLength="38.68" lengthAdjust="spacingAndGlyphs">0.99</text>
<text x="601.70" y="681.60" font-size="21.5" fill="#ffffff" textLength="44.21" lengthAdjust="spacingAndGlyphs">0x69</text>
<text x="701.67" y="681.60" font-size="21.5" fill="#ffffff" textLength="22.29" lengthAdjust="spacingAndGlyphs">28</text>
<text x="800.22" y="681.60" font-size="21.5" fill="#ffffff" textLength="11.74" lengthAdjust="spacingAndGlyphs">6</text>
<text x="888.70" y="681.60" font-size="21.5" fill="#ffffff" textLength="38.17" lengthAdjust="spacingAndGlyphs">0.17</text>
<text x="1287.47" y="429.10" font-size="23" fill="#ffffff" textLength="319.34" lengthAdjust="spacingAndGlyphs">Channel Impulse Response (CIR)</text>
<text x="1040.70" y="471.90" font-size="18.5" fill="#ffffff" textLength="51.76" lengthAdjust="spacingAndGlyphs">Freeze</text>
<text x="1147.90" y="471.90" font-size="18.5" fill="#ffffff" textLength="67.93" lengthAdjust="spacingAndGlyphs">Gradient</text>
<text x="1023.80" y="533.10" font-size="19" fill="#ffffff" textLength="132.95" lengthAdjust="spacingAndGlyphs">Smoothing Level</text>
<text x="1023.80" y="614.20" font-size="19" fill="#ffffff" textLength="60.90" lengthAdjust="spacingAndGlyphs">Zoom X</text>
<text x="1023.80" y="688.80" font-size="19" fill="#ffffff" textLength="60.90" lengthAdjust="spacingAndGlyphs">Zoom Y</text>
<text x="1023.00" y="763.80" font-size="18" fill="#ffffff" textLength="47.30" lengthAdjust="spacingAndGlyphs">x-Axis</text>
<text x="1059.60" y="793.60" font-size="18.5" fill="#ffffff" textLength="65.53" lengthAdjust="spacingAndGlyphs">Samples</text>
<text x="1058.66" y="823.00" font-size="18.5" fill="#ffffff" textLength="67.61" lengthAdjust="spacingAndGlyphs">Distance</text>
<text x="1060.40" y="853.50" font-size="18.5" fill="#ffffff" textLength="36.66" lengthAdjust="spacingAndGlyphs">Time</text>
<text x="1315.65" y="474.60" font-size="21" fill="#ffffff" textLength="44.99" lengthAdjust="spacingAndGlyphs">-20.0</text>
<text x="1315.65" y="545.40" font-size="21" fill="#ffffff" textLength="44.99" lengthAdjust="spacingAndGlyphs">-30.0</text>
<text x="1315.65" y="616.20" font-size="21" fill="#ffffff" textLength="44.99" lengthAdjust="spacingAndGlyphs">-40.0</text>
<text x="1315.65" y="687.00" font-size="21" fill="#ffffff" textLength="44.99" lengthAdjust="spacingAndGlyphs">-50.0</text>
<text x="1315.65" y="757.80" font-size="21" fill="#ffffff" textLength="44.99" lengthAdjust="spacingAndGlyphs">-60.0</text>
<text x="1315.65" y="828.60" font-size="21" fill="#ffffff" textLength="44.99" lengthAdjust="spacingAndGlyphs">-70.0</text>
<text x="1383.02" y="842.10" font-size="14.8" fill="#ffffff">-60</text>
<text x="1414.82" y="861.90" font-size="14.8" fill="#ffffff">-40</text>
<text x="1446.62" y="842.10" font-size="14.8" fill="#ffffff">-20</text>
<text x="1485.00" y="861.90" font-size="14.8" fill="#ffffff">0</text>
<text x="1512.69" y="842.10" font-size="14.8" fill="#ffffff">20</text>
<text x="1544.49" y="861.90" font-size="14.8" fill="#ffffff">40</text>
<text x="1576.29" y="842.10" font-size="14.8" fill="#ffffff">60</text>
<text x="1608.09" y="861.90" font-size="14.8" fill="#ffffff">80</text>
<text x="1635.27" y="842.10" font-size="14.8" fill="#ffffff">100</text>
<text x="1667.07" y="861.90" font-size="14.8" fill="#ffffff">120</text>
<text x="1698.87" y="842.10" font-size="14.8" fill="#ffffff">140</text>
<text x="1730.67" y="861.90" font-size="14.8" fill="#ffffff">160</text>
<text x="1762.47" y="842.10" font-size="14.8" fill="#ffffff">180</text>
<text x="1794.77" y="861.90" font-size="14.8" fill="#ffffff">200</text>
<text x="1826.57" y="842.10" font-size="14.8" fill="#ffffff">220</text>
<text x="1498.00" y="889.50" font-size="20.2" fill="#ffffff" textLength="220.71" lengthAdjust="spacingAndGlyphs">Distance Difference (km)</text>
<text x="-712.32" y="0.00" font-size="19.6" fill="#ffffff" textLength="136.66" lengthAdjust="spacingAndGlyphs" transform="translate(1292.2,0) rotate(-90)">Magnitude (dB)</text>
</svg>
</body></html>
